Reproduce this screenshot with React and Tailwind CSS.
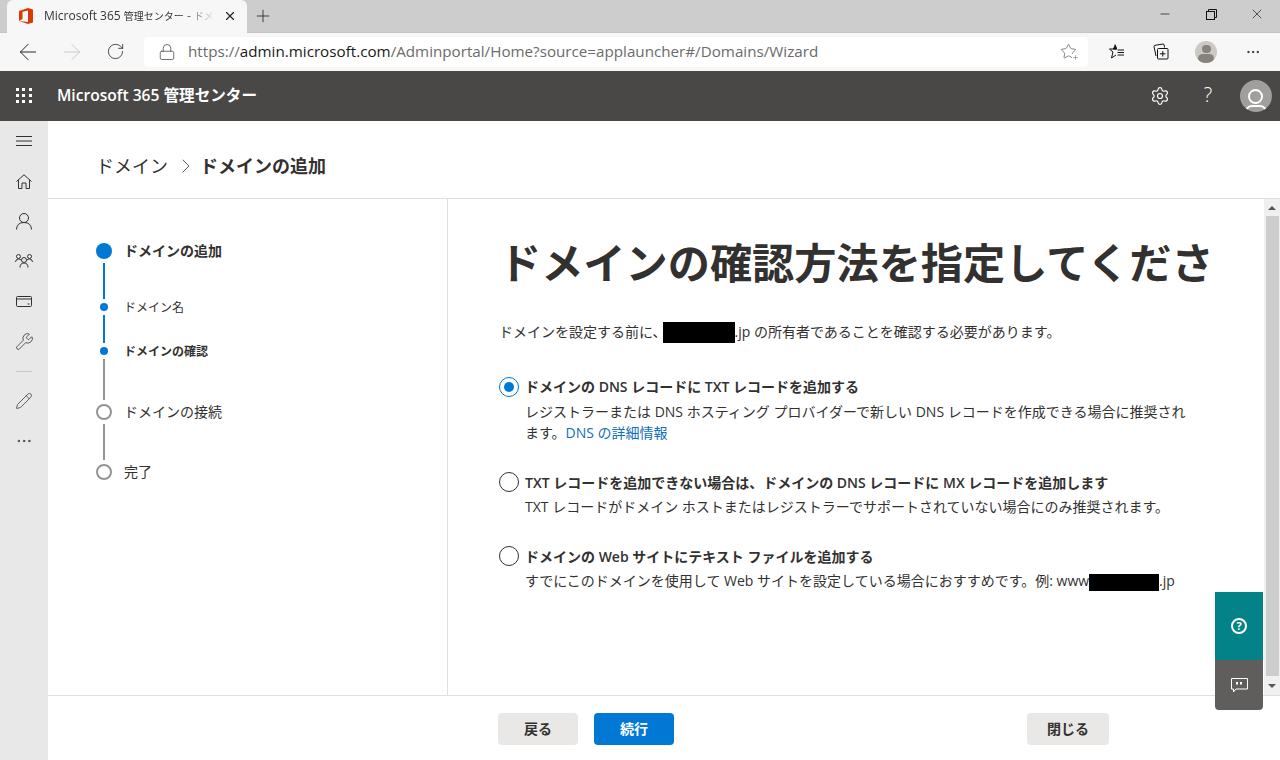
import {
  ArrowLeft,
  ArrowRight,
  ChevronRight,
  Lock,
  Minus,
  MoreHorizontal,
  Pencil,
  Plus,
  RotateCw,
  Settings,
  Star,
  Wrench,
  X,
} from "lucide-react";

const fontStack = "font-['Open_Sans','Noto_Sans_CJK_JP',sans-serif]";

function OfficeLogo() {
  return (
    <svg width="14" height="16" viewBox="0 0 14 16">
      <path d="M0 3 L9 0 L14 1.5 V14.5 L9 16 L0 13 L9 14 V2.5 L3.5 3.8 V11 L0 13 Z" fill="#d83b01" />
    </svg>
  );
}

function StarAdd() {
  return (
    <div className="relative h-[17px] w-[17px]">
      <Star size={17} strokeWidth={1} className="text-[#555]" />
      <Plus size={7} strokeWidth={1.5} className="absolute -bottom-px -right-0.5 bg-white text-[#555]" />
    </div>
  );
}

function Favorites() {
  return (
    <svg width="17" height="17" viewBox="0 0 17 17" fill="none" stroke="#111" strokeWidth="1">
      <path d="M7 1.5 L8.7 6 H1.5 L5 9 L3.5 15 L8 12 M9.5 7 H16 M9.5 9.5 H16 M9.5 12 H16" />
      <path d="M7 2.5 L5.5 6 H8.5 Z" fill="#111" />
    </svg>
  );
}

function Collections() {
  return (
    <svg width="16" height="17" viewBox="0 0 16 17" fill="none" stroke="#111" strokeWidth="1">
      <path d="M3 13 L1 3.5 Q1 2.5 2 2.3 L10 1 Q11 1 11.2 2 L11.5 4.5" />
      <rect x="4.5" y="5.5" width="10.5" height="10.5" rx="1" fill="#f7f7f7" />
      <path d="M9.8 8 V13.5 M7 10.8 H12.5" />
    </svg>
  );
}

function BrowserBar() {
  return (
    <>
      <div className="flex h-8 items-start bg-[#cdcdcd] pl-[7px]">
        <div className="relative z-10 flex h-[33px] w-[240px] items-center rounded-t-[6px] bg-[#f7f7f7] pb-px pl-[12px] pr-[10px]">
          <OfficeLogo />
          <span className="ml-[11px] w-[172px] overflow-hidden whitespace-nowrap text-xs text-[#333] [mask-image:linear-gradient(to_right,black_80%,transparent)]">
            Microsoft 365 <span className="text-[10px]">管理センター</span> - <span className="text-[10px]">ドメインの追加</span>
          </span>
          <X size={14} strokeWidth={2} className="ml-auto text-[#222]" />
        </div>
        <div className="flex h-8 w-8 items-center justify-center">
          <Plus size={20} strokeWidth={1} className="text-[#222]" />
        </div>
        <div className="ml-auto flex h-7 items-center text-[#111]">
          <div className="flex w-[46px] justify-center"><Minus size={14} strokeWidth={1.2} /></div>
          <div className="flex w-[46px] justify-center">
            <svg width="11" height="11" viewBox="0 0 11 11" fill="none" stroke="#111">
              <rect x="0.5" y="2.5" width="8" height="8" />
              <path d="M2.5 2.5 V0.5 H10.5 V8.5 H8.5" />
            </svg>
          </div>
          <div className="flex w-[46px] justify-center"><X size={16} strokeWidth={1} /></div>
        </div>
      </div>
      <div className="flex h-[39px] items-center border-t border-[#c4c4c4] bg-[#f7f7f7] pb-px">
        <div className="flex w-[144px] items-center text-[#222]">
          <div className="flex w-[56px] justify-center"><ArrowLeft size={26} strokeWidth={0.9} /></div>
          <div className="flex w-[31px] justify-center"><ArrowRight size={26} strokeWidth={0.9} className="text-[#c8c8c8]" /></div>
          <div className="flex w-[57px] justify-center"><RotateCw size={19} strokeWidth={1} /></div>
        </div>
        <div className="flex h-[30px] w-[944px] items-center rounded-[4px] bg-white pl-[14px] pr-[11px]">
          <Lock size={18} strokeWidth={1} className="text-[#444]" />
          <span className="ml-[12px] whitespace-nowrap text-[15.2px] text-[#6b6b6b]">
            https://<span className="text-[#1a1a1a]">admin.microsoft.com</span>/Adminportal/Home?source=applauncher#/Domains/Wizard
          </span>
          <div className="ml-auto"><StarAdd /></div>
        </div>
        <div className="flex flex-1 items-center">
          <div className="flex w-[57px] justify-center"><Favorites /></div>
          <div className="flex w-[31px] justify-center"><Collections /></div>
          <div className="flex w-[60px] justify-center">
            <div className="flex h-[22px] w-[22px] flex-col items-center overflow-hidden rounded-full bg-[#cbc9c4]">
              <div className="mt-[4px] h-[9px] w-[9px] rounded-full bg-[#87827c]" />
              <div className="mt-px h-[10px] w-[16px] rounded-full bg-[#87827c]" />
            </div>
          </div>
          <div className="flex w-[34px] justify-center"><MoreHorizontal size={16} strokeWidth={1.5} className="text-[#222]" /></div>
        </div>
      </div>
    </>
  );
}

function AppHeader() {
  return (
    <div className="flex h-[50px] shrink-0 items-center bg-[#494847] text-white">
      <div className="mb-[2px] ml-[16px] grid w-4 grid-cols-3 gap-[3px]">
        {[0, 1, 2, 3, 4, 5, 6, 7, 8].map((i) => (
          <span key={i} className="h-[3px] w-[3px] bg-white" />
        ))}
      </div>
      <span className="ml-[25px] text-[15.6px] font-semibold">Microsoft 365 管理センター</span>
      <Settings size={20} strokeWidth={1.4} className="ml-auto mb-px" />
      <span className="ml-[30px] w-[16px] pb-[2px] text-center text-xl font-light">?</span>
      <div className="relative ml-[24px] mr-[8px] h-8 w-8 overflow-hidden rounded-full bg-[#a09f9e]">
        <div className="absolute left-[8px] top-[9px] h-[15px] w-[15px] rounded-full border-2 border-white" />
        <div className="absolute left-[5px] top-[25px] h-[14px] w-[22px] rounded-full border-2 border-white" />
      </div>
    </div>
  );
}

function HomeIcon() {
  return (
    <svg width="16" height="15" viewBox="0 0 16 15" fill="none" stroke="#323130">
      <path d="M0.5 7.5 L8 0.8 L15.5 7.5 M2.5 6 V14.5 H6 V9 H10 V14.5 H13.5 V6" />
    </svg>
  );
}

function UserIcon() {
  return (
    <svg width="16" height="17" viewBox="0 0 16 17" fill="none" stroke="#323130">
      <circle cx="8" cy="5" r="4.5" />
      <path d="M0.5 16.5 Q0.8 9.5 8 9.5 Q15.2 9.5 15.5 16.5" />
    </svg>
  );
}

function PeopleIcon() {
  return (
    <svg width="18" height="16" viewBox="0 0 18 16" fill="none" stroke="#323130" strokeWidth="1">
      <circle cx="9" cy="7" r="2.5" />
      <path d="M5 14.5 Q5 10 9 10 Q13 10 13 14.5" />
      <circle cx="3.5" cy="3.5" r="2" />
      <circle cx="14.5" cy="3.5" r="2" />
      <path d="M0.5 9 Q0.8 6 3.5 6 Q5 6 6 7 M17.5 9 Q17.2 6 14.5 6 Q13 6 12 7" />
    </svg>
  );
}

function CardIcon() {
  return (
    <svg width="16" height="11" viewBox="0 0 16 11" fill="none" stroke="#323130">
      <rect x="0.5" y="0.5" width="15" height="10" rx="1" />
      <path d="M0.5 3 H15.5 M11.5 8 H13.5" />
    </svg>
  );
}

function MenuIcon() {
  return (
    <svg width="16" height="10" viewBox="0 0 16 10" stroke="#323130" strokeWidth="1">
      <path d="M0 0.5 H16 M0 5 H16 M0 9.5 H16" />
    </svg>
  );
}

function Sidebar() {
  const icons = [
    <MenuIcon key="menu" />,
    <HomeIcon key="home" />,
    <UserIcon key="user" />,
    <PeopleIcon key="people" />,
    <CardIcon key="card" />,
    <Wrench key="wrench" size={19} strokeWidth={1} />,
  ];
  return (
    <div className="flex w-12 shrink-0 flex-col items-center bg-[#e8e8e8] text-[#323130]">
      {icons.map((icon) => (
        <div key={icon.key} className="flex h-10 w-12 items-center justify-center">{icon}</div>
      ))}
      <div className="flex h-5 items-center"><div className="h-px w-4 bg-[#c8c6c4]" /></div>
      <div className="flex h-10 items-center"><Pencil size={18} strokeWidth={1} /></div>
      <div className="flex h-10 items-center"><MoreHorizontal size={18} strokeWidth={1.2} /></div>
    </div>
  );
}

function StepRow({ marker, label, className }) {
  const markers = {
    big: "h-4 w-4 bg-[#0078d4]",
    dot: "h-2 w-2 bg-[#0078d4]",
    open: "h-4 w-4 border-2 border-[#979593] bg-white",
  };
  return (
    <div className={`flex items-center gap-3 ${marker === "dot" ? "h-2" : "h-4"}`}>
      <div className="flex w-4 justify-center">
        <span className={`rounded-full ${markers[marker]}`} />
      </div>
      <span className={`whitespace-nowrap text-[#323130] ${className}`}>{label}</span>
    </div>
  );
}

function Connector({ height, done }) {
  return (
    <div className="my-1 flex w-4 justify-center">
      <div className={`w-0.5 ${height} ${done ? "bg-[#0078d4]" : "bg-[#979593]"}`} />
    </div>
  );
}

function Stepper() {
  return (
    <div className="w-[400px] shrink-0 border-r border-[#e1dfdd] pl-[48px] pt-[44px]">
      <StepRow marker="big" label="ドメインの追加" className="text-sm font-semibold" />
      <Connector height="h-9" done />
      <StepRow marker="dot" label="ドメイン名" className="mt-[2px] text-xs" />
      <Connector height="h-7" done />
      <StepRow marker="dot" label="ドメインの確認" className="mt-[2px] text-xs font-semibold" />
      <Connector height="h-[41px]" />
      <StepRow marker="open" label="ドメインの接続" className="text-sm" />
      <Connector height="h-9" />
      <StepRow marker="open" label="完了" className="text-sm" />
    </div>
  );
}

function Radio({ checked }) {
  return (
    <span
      className={`flex h-5 w-5 shrink-0 items-center justify-center rounded-full border bg-white ${
        checked ? "border-[#0078d4]" : "border-[#323130]"
      }`}
    >
      {checked ? <span className="h-[10px] w-[10px] rounded-full bg-[#0078d4]" /> : null}
    </span>
  );
}

function Option({ checked, title, className, titleClassName, children }) {
  return (
    <div className={className}>
      <div className="flex h-5 items-center gap-[6px]">
        <Radio checked={checked} />
        <span className={`whitespace-nowrap text-sm font-semibold text-[#323130] ${titleClassName}`}>{title}</span>
      </div>
      <p className="mt-1 whitespace-nowrap pl-[26px] text-sm leading-[21px] text-[#323130]">{children}</p>
    </div>
  );
}

function Redacted({ width, height }) {
  return <span className={`inline-block bg-black align-middle ${width} ${height}`} />;
}

function Scrollbar() {
  return (
    <div className="flex w-4 shrink-0 flex-col items-center bg-[#f0f0f0]">
      <div className="flex h-[17px] items-center justify-center">
        <span className="h-0 w-0 border-x-[4px] border-b-[4px] border-x-transparent border-b-[#555]" />
      </div>
      <div className="h-[460px] w-[13px] bg-[#cdcdcd]" />
      <div className="flex flex-1 items-center justify-center">
        <span className="h-0 w-0 border-x-[4px] border-t-[4px] border-x-transparent border-t-[#555]" />
      </div>
    </div>
  );
}

function MainPane() {
  return (
    <div className="min-w-0 flex-1 pl-[51px]">
      <h1 className="mt-8 w-[716px] overflow-hidden whitespace-nowrap text-[42.2px] font-semibold leading-[64px] text-[#323130]">
        ドメインの確認方法を指定してください
      </h1>
      <p className="mt-[27px] flex h-5 items-center whitespace-nowrap text-sm text-[#323130]">
        ドメインを設定する前に、
        <Redacted width="w-[72px] -ml-[4px]" height="h-[21px]" />
        .jp の所有者であることを確認する必要があります。
      </p>
      <Option
        checked
        className="mt-[35px]"
        title="ドメインの DNS レコードに TXT レコードを追加する"
      >
        レジストラーまたは DNS ホスティング プロバイダーで新しい DNS レコードを作成できる場合に推奨され
        <br />
        ます。<span className="text-[#106ebe]">DNS の詳細情報</span>
      </Option>
      <Option
        className="mt-[29px]"
        titleClassName="mt-[2px]"
        title="TXT レコードを追加できない場合は、ドメインの DNS レコードに MX レコードを追加します"
      >
        TXT レコードがドメイン ホストまたはレジストラーでサポートされていない場合にのみ推奨されます。
      </Option>
      <Option
        className="mt-[29px]"
        titleClassName="mt-[2px]"
        title="ドメインの Web サイトにテキスト ファイルを追加する"
      >
        すでにこのドメインを使用して Web サイトを設定している場合におすすめです。例: www
        <Redacted width="w-[70px]" height="h-[17px]" />
        .jp
      </Option>
    </div>
  );
}

function FloatingHelp() {
  return (
    <div className="absolute right-[17px] top-[592px] z-10 w-12">
      <div className="flex h-[68px] items-center justify-center bg-[#038387]">
        <div className="flex h-4 w-4 items-center justify-center rounded-full border-2 border-white text-[11px] font-bold text-white">?</div>
      </div>
      <div className="flex h-[50px] items-center justify-center rounded-b-sm bg-[#605e5c]">
        <svg width="17" height="15" viewBox="0 0 17 15" fill="none" stroke="white">
          <path d="M0.5 0.5 H16.5 V11 H5 L2.5 14 V11 H0.5 Z" />
          <path d="M6 4 V6.5 M10 4 V6.5" strokeWidth="2" />
        </svg>
      </div>
    </div>
  );
}

export default function App() {
  return (
    <div className={`relative flex h-[760px] w-[1280px] flex-col overflow-hidden bg-white ${fontStack}`}>
      <BrowserBar />
      <AppHeader />
      <div className="flex min-h-0 flex-1">
        <Sidebar />
        <div className="flex min-w-0 flex-1 flex-col">
          <div className="flex h-[78px] shrink-0 items-center border-b border-[#e1dfdd] pl-[48px] pt-[12px] text-lg text-[#323130]">
            <span>ドメイン</span>
            <ChevronRight size={24} strokeWidth={1} className="ml-[6px] mr-[2px] text-[#605e5c]" />
            <span className="font-semibold">ドメインの追加</span>
          </div>
          <div className="flex min-h-0 flex-1">
            <Stepper />
            <MainPane />
            <Scrollbar />
          </div>
          <div className="flex h-[65px] shrink-0 items-center border-t border-[#e1dfdd] pl-[450px] pt-[2px] text-sm font-semibold">
            <button className="h-8 w-20 rounded-sm bg-[#e9e8e7] text-[#323130]">戻る</button>
            <button className="ml-4 h-8 w-20 rounded-sm bg-[#0078d4] text-white">続行</button>
            <button className="ml-auto mr-[171px] h-8 w-[82px] rounded-sm bg-[#e9e8e7] text-[#323130]">閉じる</button>
          </div>
        </div>
      </div>
      <FloatingHelp />
    </div>
  );
}
